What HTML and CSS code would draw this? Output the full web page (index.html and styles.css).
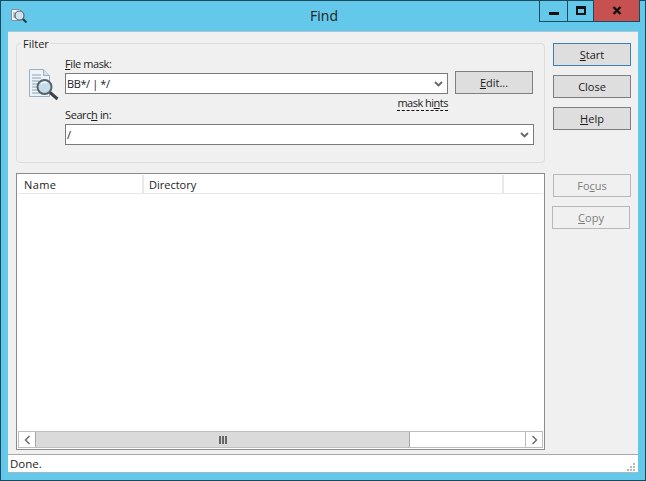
FILE: index.html
```html
<!DOCTYPE html>
<html lang="en">
<head>
<meta charset="utf-8">
<title>Find</title>
<link rel="stylesheet" href="styles.css">
</head>
<body>
<div class="window">
  <header class="titlebar">
    <svg class="app-icon" width="18" height="18" viewBox="0 0 18 18">
      <path d="M1.5 2.5h8l3 3v8h-11z" fill="#f4f7fa" stroke="#7f93a6"/>
      <path d="M3 6h5M3 8h3M3 10h3" stroke="#7f93a6"/>
      <circle cx="9.5" cy="8.5" r="4.5" fill="#cfe3ee" stroke="#56636e" stroke-width="1.2"/>
      <path d="M13 12l3.5 3.5" stroke="#2c3640" stroke-width="2"/>
    </svg>
    <div class="title">Find</div>
    <div class="controls">
      <div class="ctl ctl-min"><span class="glyph-min"></span></div>
      <div class="ctl ctl-max"><span class="glyph-max"></span></div>
      <div class="ctl ctl-close">
        <svg width="10" height="9" viewBox="0 0 10 9"><path d="M1.5 1l7 7M8.5 1l-7 7" stroke="#111" stroke-width="2.4"/></svg>
      </div>
    </div>
  </header>
  <div class="client">
    <div class="content">
      <div class="left">
        <fieldset class="filter">
          <legend>Filter</legend>
          <svg class="filter-icon" width="34" height="34" viewBox="0 0 34 34">
            <path d="M1.5 1.5h14l6 6v21h-20z" fill="#eef3f8" stroke="#9db0c2"/>
            <path d="M15.5 1.5v6h6" fill="#d5e0ea" stroke="#9db0c2"/>
            <path d="M4 7h9M4 10h9M4 13h7M4 16h6M4 19h6M4 22h6M4 25h8" stroke="#8aa2b8"/>
            <circle cx="16.5" cy="19" r="7" fill="#c5dcea" stroke="#56636e" stroke-width="2"/>
            <path d="M13 16a5 5 0 0 1 6-1" fill="none" stroke="#f4fafd" stroke-width="1.5"/>
            <path d="M22 24.500l7.500 6.500" stroke="#39424a" stroke-width="3"/>
          </svg>
          <div class="fields">
            <label class="lbl"><u>F</u>ile mask:</label>
            <div class="row">
              <div class="combo combo-short"><span>BB*/ | */</span>
                <svg class="chev" width="9" height="6" viewBox="0 0 9 6"><path d="M1 1l3.5 3.5L8 1" fill="none" stroke="#666" stroke-width="1.8"/></svg>
              </div>
              <div class="btn btn-edit"><span><u>E</u>dit...</span></div>
            </div>
            <div class="hints"><span class="hints-text">mask hi<u class="plain">n</u>ts</span></div>
            <label class="lbl lbl-search">Searc<u>h</u> in:</label>
            <div class="combo combo-long"><span>/</span>
              <svg class="chev" width="9" height="6" viewBox="0 0 9 6"><path d="M1 1l3.5 3.5L8 1" fill="none" stroke="#666" stroke-width="1.8"/></svg>
            </div>
          </div>
        </fieldset>
        <div class="list">
          <div class="list-head">
            <div class="col col-name">Name</div>
            <div class="col col-dir">Directory</div>
            <div class="col col-rest"></div>
          </div>
          <div class="list-body"></div>
          <div class="hscroll">
            <div class="sb-btn">
              <svg width="7" height="10" viewBox="0 0 7 10"><path d="M5.5 1L1.5 5l4 4" fill="none" stroke="#606060" stroke-width="1.3"/></svg>
            </div>
            <div class="sb-thumb"><span class="grip-bars"></span></div>
            <div class="sb-track"></div>
            <div class="sb-btn">
              <svg width="7" height="10" viewBox="0 0 7 10"><path d="M1.500 1l4 4-4 4" fill="none" stroke="#606060" stroke-width="1.3"/></svg>
            </div>
          </div>
        </div>
      </div>
      <div class="right">
        <div class="btn btn-side btn-default"><span><u>S</u>tart</span></div>
        <div class="btn btn-side">Close</div>
        <div class="btn btn-side"><span><u>H</u>elp</span></div>
        <div class="btn btn-side btn-off btn-focus"><span>Fo<u>c</u>us</span></div>
        <div class="btn btn-side btn-off btn-copy"><span><u>C</u>opy</span></div>
      </div>
    </div>
    <footer class="status">
      <span>Done.</span>
      <svg width="10" height="10" viewBox="0 0 10 10" class="size-grip">
        <path d="M7 1h2v2H7zM4 4h2v2H4zM7 4h2v2H7zM1 7h2v2H1zM4 7h2v2H4zM7 7h2v2H7z" fill="#b9b9b9"/>
      </svg>
    </footer>
  </div>
</div>
</body>
</html>
```
FILE: styles.css
```css
* { box-sizing: border-box; }
html, body { margin: 0; padding: 0; }
body {
  width: 646px;
  height: 481px;
  overflow: hidden;
  font-family: "Open Sans", "Noto Sans", sans-serif;
  font-size: 11px;
  color: #1c1c1c;
}
.window {
  width: 646px;
  height: 481px;
  background: #63c8ea;
  border: 1px solid #1b4a5f;
  display: flex;
  flex-direction: column;
  padding: 0 7px 7px;
}
.titlebar {
  height: 30px;
  display: flex;
  flex: none;
  position: relative;
}
.app-icon { position: absolute; left: 2px; top: 6px; }
.title {
  flex: 1;
  text-align: center;
  font-size: 14px;
  line-height: 29px;
  color: #222;
  padding-left: 2px;
}
.controls {
  position: absolute;
  right: -2px;
  top: -1px;
  height: 22px;
  display: flex;
  border: 1px solid #1b4a5f;
  border-top: 0;
}
.ctl {
  height: 21px;
  display: flex;
  align-items: center;
  justify-content: center;
}
.ctl-min { width: 28px; border-right: 1px solid #1b4a5f; }
.ctl-max { width: 26px; border-right: 1px solid #1b4a5f; }
.ctl-close { width: 45px; background: #c75050; }
.glyph-min { width: 10px; height: 3px; background: #111; margin-top: 6px; }
.glyph-max { width: 10px; height: 9px; border: 2px solid #111; border-top-width: 3px; }
.client {
  flex: 1;
  display: flex;
  flex-direction: column;
  background: #f0f0f0;
  border-top: 1px solid #a9c6d2;
  min-height: 0;
}
.content {
  flex: 1;
  display: flex;
  padding: 11px 0 0 8px;
  min-height: 0;
}
.left { width: 529px; display: flex; flex-direction: column; }
.right { width: 79px; margin-left: 8px; display: flex; flex-direction: column; }

.filter {
  margin: -7px 0 0;
  padding: 0;
  height: 127px;
  border: 1px solid #dcdcdc;
  border-radius: 4px;
  display: flex;
  position: relative;
}
.filter legend {
  margin-left: 4px;
  padding: 0 2px;
  line-height: 16px;
  height: 14px;
}
.filter-icon { position: absolute; left: 11px; top: 18px; }
.fields { padding: 7px 0 0 48px; width: 100%; }
.lbl { display: block; height: 13px; line-height: 13px; margin-bottom: 1px; letter-spacing: -0.4px; }
.row { display: flex; align-items: flex-end; }
.combo {
  background: #fff;
  border: 1px solid #7a7a7a;
  height: 21px;
  display: flex;
  align-items: center;
  justify-content: space-between;
  padding: 0 4px 0 1px;
  letter-spacing: -0.4px;
}
.combo-short { width: 383px; }
.combo-long { width: 469px; }
.chev { flex: none; }
.hints {
  width: 383px;
  text-align: right;
  height: 16px;
  padding-top: 2px;
  line-height: 13px;
  letter-spacing: -0.5px;
}
.hints-text { border-bottom: 1px dashed #111; display: inline-block; height: 15px; }
.plain { text-decoration: underline; }
.lbl-search { margin-top: -2px; margin-bottom: 3px; }
.btn {
  background: #dedede;
  border: 1px solid #7f7f7f;
  height: 23px;
  display: flex;
  align-items: center;
  justify-content: center;
  color: #1c1c1c;
}
.btn-edit { width: 78px; margin-left: 7px; height: 23px; }
.btn-side { width: 78px; margin-bottom: 9px; flex: none; }
.btn-default { border-color: #3c7fb1; }
.btn-off { background: #f0f0f0; border-color: #b8b8b8; color: #7d7d7d; }
.btn-focus { margin-top: 35px; }
.btn-copy { margin-left: -1px; }

.list {
  margin-top: 10px;
  height: 277px;
  background: #fff;
  border: 1px solid #8c8c8c;
  padding: 1px;
  display: flex;
  flex-direction: column;
}
.list-head {
  display: flex;
  height: 19px;
  flex: none;
  border-bottom: 1px solid #e6e6e6;
}
.col { line-height: 20px; padding-left: 6px; border-right: 2px solid #e8e8e8; }
.col-name { width: 126px; letter-spacing: 0.4px; }
.col-dir { width: 360px; padding-left: 5px; }
.col-rest { flex: 1; border-right: 0; }
.list-body { flex: 1; }
.hscroll {
  height: 17px;
  flex: none;
  display: flex;
  border: 1px solid #bdbdbd;
  background: #fff;
}
.sb-btn {
  width: 16px;
  display: flex;
  align-items: center;
  justify-content: center;
  flex: none;
}
.sb-thumb {
  width: 375px;
  background: #dadada;
  border-left: 1px solid #a8a8a8;
  border-right: 1px solid #a8a8a8;
  display: flex;
  align-items: center;
  justify-content: center;
}
.grip-bars {
  width: 8px;
  height: 8px;
  background: linear-gradient(90deg, #666 2px, transparent 2px, transparent 3px, #666 3px, #666 5px, transparent 5px, transparent 6px, #666 6px);
}
.sb-track { flex: 1; border-right: 1px solid #bdbdbd; }

.status {
  height: 19px;
  flex: none;
  background: #fff;
  border-top: 1px solid #a8a8a8;
  border-bottom: 1px solid #a8b8c0;
  margin-top: 3px;
  padding: 0 2px;
  display: flex;
  align-items: center;
  justify-content: space-between;
  font-size: 11.5px;
}
.size-grip { align-self: flex-end; }
```
